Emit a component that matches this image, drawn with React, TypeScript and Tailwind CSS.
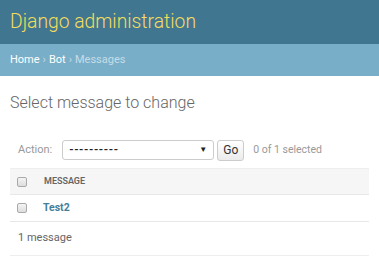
export default function App() {
  return (
    <div className="w-[379px] h-[280px] bg-white overflow-hidden font-['Roboto',sans-serif]">
      <div className="h-[44px] bg-[#417690] flex items-center px-[10px]">
        <h1 className="text-[19.3px] font-light text-[#f5dd5d] leading-none">Django administration</h1>
      </div>
      <div className="h-[32px] bg-[#79aec8] flex items-center px-[10px] text-[11px] text-[#c4dce8]">
        <span className="text-white">Home</span>
        <span className="mx-[3px]">›</span>
        <span className="text-white">Bot</span>
        <span className="mx-[3px]">›</span>
        <span>Messages</span>
      </div>
      <div className="px-[10px]">
        <h2 className="mt-[19px] text-[16px] font-light text-[#666] leading-none">Select message to change</h2>
        <div className="mt-[29px] flex items-center h-[20px] pl-[8px] text-[11px] text-[#999]">
          <span>Action:</span>
          <div className="ml-[10px] w-[152px] h-[20px] border border-[#ccc] rounded-[3px] flex items-center justify-between px-[6px] text-[#222] text-[11px] font-bold">
            <span className="tracking-[0.6px]">----------</span>
            <span className="text-[8px] text-[#222]">▼</span>
          </div>
          <div className="ml-[3px] w-[27px] h-[21px] border border-[#ccc] rounded-[3px] bg-gradient-to-b from-white to-[#ebebeb] flex items-center justify-center text-[12px] text-[#333]">Go</div>
          <span className="ml-[9px] text-[10.5px] text-[#999]">0 of 1 selected</span>
        </div>
        <div className="mt-[8px]">
          <div className="h-[26px] bg-[#f6f6f6] border-t border-[#eee] flex items-center pl-[7px]">
            <span className="w-[10px] h-[10px] border border-[#aaa] rounded-[2px] bg-gradient-to-b from-[#f4f4f4] to-[#ddd]" />
            <span className="ml-[17px] text-[9px] font-semibold text-[#666] uppercase">Message</span>
          </div>
          <div className="h-[28px] border-t border-b border-[#e8e8e8] flex items-center pl-[7px]">
            <span className="w-[10px] h-[10px] border border-[#aaa] rounded-[2px] bg-gradient-to-b from-[#f4f4f4] to-[#ddd]" />
            <span className="ml-[16px] text-[10.5px] font-bold text-[#447e9b]">Test2</span>
          </div>
          <div className="h-[34px] border-b border-[#eee] flex items-center pl-[8px] text-[11px] text-[#666]">1 message</div>
        </div>
      </div>
    </div>
  );
}
